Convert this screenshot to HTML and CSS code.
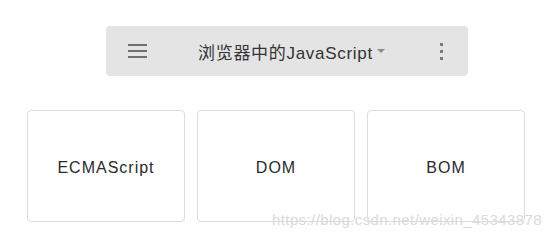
FILE: index.html
```html
<!DOCTYPE html>
<html lang="zh-CN">
<head>
    <meta charset="UTF-8">
    <meta name="viewport" content="width=device-width, initial-scale=1.0">
    <title>浏览器中的JavaScript</title>
    <link rel="stylesheet" href="styles.css">
</head>
<body>
    <div class="page">
        <div class="toolbar">
            <div class="menu-icon">
                <span></span><span></span><span></span>
            </div>
            <div class="title">浏览器中的JavaScript<span class="caret"></span></div>
            <div class="more-icon">
                <span></span><span></span><span></span>
            </div>
        </div>

        <div class="cards">
            <div class="card">ECMAScript</div>
            <div class="card">DOM</div>
            <div class="card">BOM</div>
        </div>

        <div class="watermark">https://blog.csdn.net/weixin_45343878</div>
    </div>
</body>
</html>
```

FILE: styles.css
```css
body {
    margin: 0;
    background-color: #fff;
    font-family: "Liberation Sans", "Noto Sans CJK SC", sans-serif;
    color: #333;
}
.page {
    position: relative;
    width: 553px;
    height: 241px;
    overflow: hidden;
}
.toolbar {
    margin: 26px 0 0 106px;
    width: 362px;
    height: 50px;
    background-color: #e4e4e4;
    border-radius: 4px;
    display: flex;
    align-items: center;
    padding: 0 22px;
    box-sizing: border-box;
}
.menu-icon {
    width: 19px;
    display: flex;
    flex-direction: column;
    gap: 4px;
}
.menu-icon span {
    display: block;
    height: 2px;
    background-color: #707070;
}
.title {
    margin-left: 51px;
    font-size: 17px;
    letter-spacing: 0.7px;
    color: #333;
    display: flex;
    align-items: center;
}
.caret {
    margin-left: 4px;
    width: 0;
    height: 0;
    border-left: 4px solid transparent;
    border-right: 4px solid transparent;
    border-top: 4px solid #8a8a8a;
}
.more-icon {
    margin-left: auto;
    margin-right: 3px;
    display: flex;
    flex-direction: column;
    gap: 4px;
}
.more-icon span {
    display: block;
    width: 3px;
    height: 3px;
    background-color: #7a7a7a;
}
.cards {
    margin: 34px 0 0 27px;
    display: flex;
    gap: 12px;
}
.card {
    width: 158px;
    height: 112px;
    box-sizing: border-box;
    padding-top: 3px;
    border: 1px solid #dcdcdc;
    border-radius: 4px;
    display: flex;
    align-items: center;
    justify-content: center;
    font-size: 16px;
    letter-spacing: 1px;
    color: #2a2a2a;
}
.watermark {
    position: absolute;
    left: 272px;
    top: 211px;
    font-size: 15px;
    color: #dadada;
    letter-spacing: 0.4px;
}
```
